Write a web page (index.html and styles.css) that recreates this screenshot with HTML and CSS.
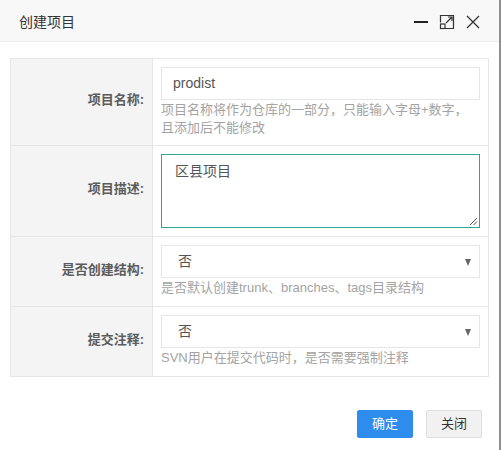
FILE: index.html
```html
<!DOCTYPE html>
<html lang="zh-CN">
<head>
<meta charset="utf-8">
<title>创建项目</title>
<link rel="stylesheet" href="styles.css">
</head>
<body>
<div class="dlg">
  <div class="title">
    <span class="title-text">创建项目</span>
    <div class="tools">
      <svg class="ico" width="16" height="16" viewBox="0 0 16 16"><path d="M1 8h14" stroke="#222" stroke-width="2"/></svg>
      <svg class="ico" width="16" height="16" viewBox="0 0 16 16" fill="none" stroke="#333" stroke-width="1.2">
        <path d="M1.5 8.5V1.5h13v13h-8.5"/>
        <rect x="1.5" y="10" width="4.5" height="4.5"/>
        <path d="M7 9L13 3M9 3h4v4"/>
      </svg>
      <svg class="ico" width="16" height="16" viewBox="0 0 16 16"><path d="M2 2L14 14M14 2L2 14" stroke="#333" stroke-width="1.3"/></svg>
    </div>
  </div>
  <div class="content">
    <table class="form">
      <tr class="r1">
        <th>项目名称:</th>
        <td>
          <div class="input">prodist</div>
          <div class="help">项目名称将作为仓库的一部分，只能输入字母+数字，<br>且添加后不能修改</div>
        </td>
      </tr>
      <tr class="r2">
        <th>项目描述:</th>
        <td>
          <div class="textarea">区县项目
            <svg class="grip" width="9" height="9" viewBox="0 0 9 9"><path d="M8 1L1 8M8 4.5L4.5 8" stroke="#555" stroke-width="1"/></svg>
          </div>
        </td>
      </tr>
      <tr class="r3">
        <th>是否创建结构:</th>
        <td>
          <div class="select"><span>否</span><span class="arrow"></span></div>
          <div class="help">是否默认创建trunk、branches、tags目录结构</div>
        </td>
      </tr>
      <tr class="r3">
        <th>提交注释:</th>
        <td>
          <div class="select"><span>否</span><span class="arrow"></span></div>
          <div class="help">SVN用户在提交代码时，是否需要强制注释</div>
        </td>
      </tr>
    </table>
  </div>
  <div class="footer">
    <span class="btn btn-primary">确定</span>
    <span class="btn">关闭</span>
  </div>
</div>
</body>
</html>
```

FILE: styles.css
```css
html, body {
  margin: 0;
  padding: 0;
  background: #fff;
}
body {
  font-family: "Liberation Sans", "Noto Sans CJK SC", sans-serif;
  color: #333;
}
.dlg {
  width: 499px;
  height: 450px;
  border-right: 2px solid #8f8f8f;
  background: #fff;
  display: flex;
  flex-direction: column;
}
.title {
  height: 41px;
  border-bottom: 1px solid #eee;
  background: #f8f8f8;
  display: flex;
  align-items: center;
  justify-content: space-between;
  padding: 0 18px 0 19px;
}
.title-text {
  font-size: 14px;
  color: #333;
}
.tools {
  display: flex;
  align-items: center;
  gap: 10px;
  padding-top: 2px;
}
.ico {
  display: block;
}
.content {
  padding: 16px 10px 0 10px;
}
.form {
  width: 479px;
  border-collapse: collapse;
  font-size: 13px;
}
.form th, .form td {
  border: 1px solid #e6e6e6;
}
.form th {
  width: 133px;
  background: #f4f4f4;
  text-align: right;
  font-weight: bold;
  color: #5c5c5c;
  padding: 0 8px 7px 0;
  vertical-align: middle;
  white-space: nowrap;
}
.form td {
  background: #fff;
  padding: 8px 8px 9px 8px;
  vertical-align: top;
}
.r1 td { padding-bottom: 8px; }
.r2 td { padding-bottom: 8px; }
.input, .select {
  box-sizing: border-box;
  height: 33px;
  border: 1px solid #e6e6e6;
  font-size: 14px;
  line-height: 31px;
  color: #555;
  padding-left: 11px;
}
.select {
  padding-left: 16px;
  padding-right: 8px;
  display: flex;
  justify-content: space-between;
  align-items: center;
}
.arrow {
  width: 0;
  height: 0;
  border-left: 3.5px solid transparent;
  border-right: 3.5px solid transparent;
  border-top: 7px solid #666;
  margin-top: 1px;
}
.help {
  color: #a3a3a3;
  font-size: 13px;
  line-height: 18px;
  padding-top: 1px;
}
.textarea {
  position: relative;
  box-sizing: border-box;
  height: 74px;
  border: 1px solid #2ea596;
  font-size: 14px;
  color: #555;
  padding: 7px 13px;
  line-height: 18px;
}
.grip {
  position: absolute;
  right: 1px;
  bottom: 1px;
}
.footer {
  display: flex;
  justify-content: flex-end;
  gap: 13px;
  padding: 33px 17px 0 0;
}
.btn {
  box-sizing: border-box;
  height: 28px;
  line-height: 26px;
  padding: 0 14px;
  font-size: 13px;
  border: 1px solid #dedede;
  background: #f1f1f1;
  color: #333;
  border-radius: 2px;
}
.btn-primary {
  background: #2e8cec;
  border-color: #2e8cec;
  color: #fff;
}
```
